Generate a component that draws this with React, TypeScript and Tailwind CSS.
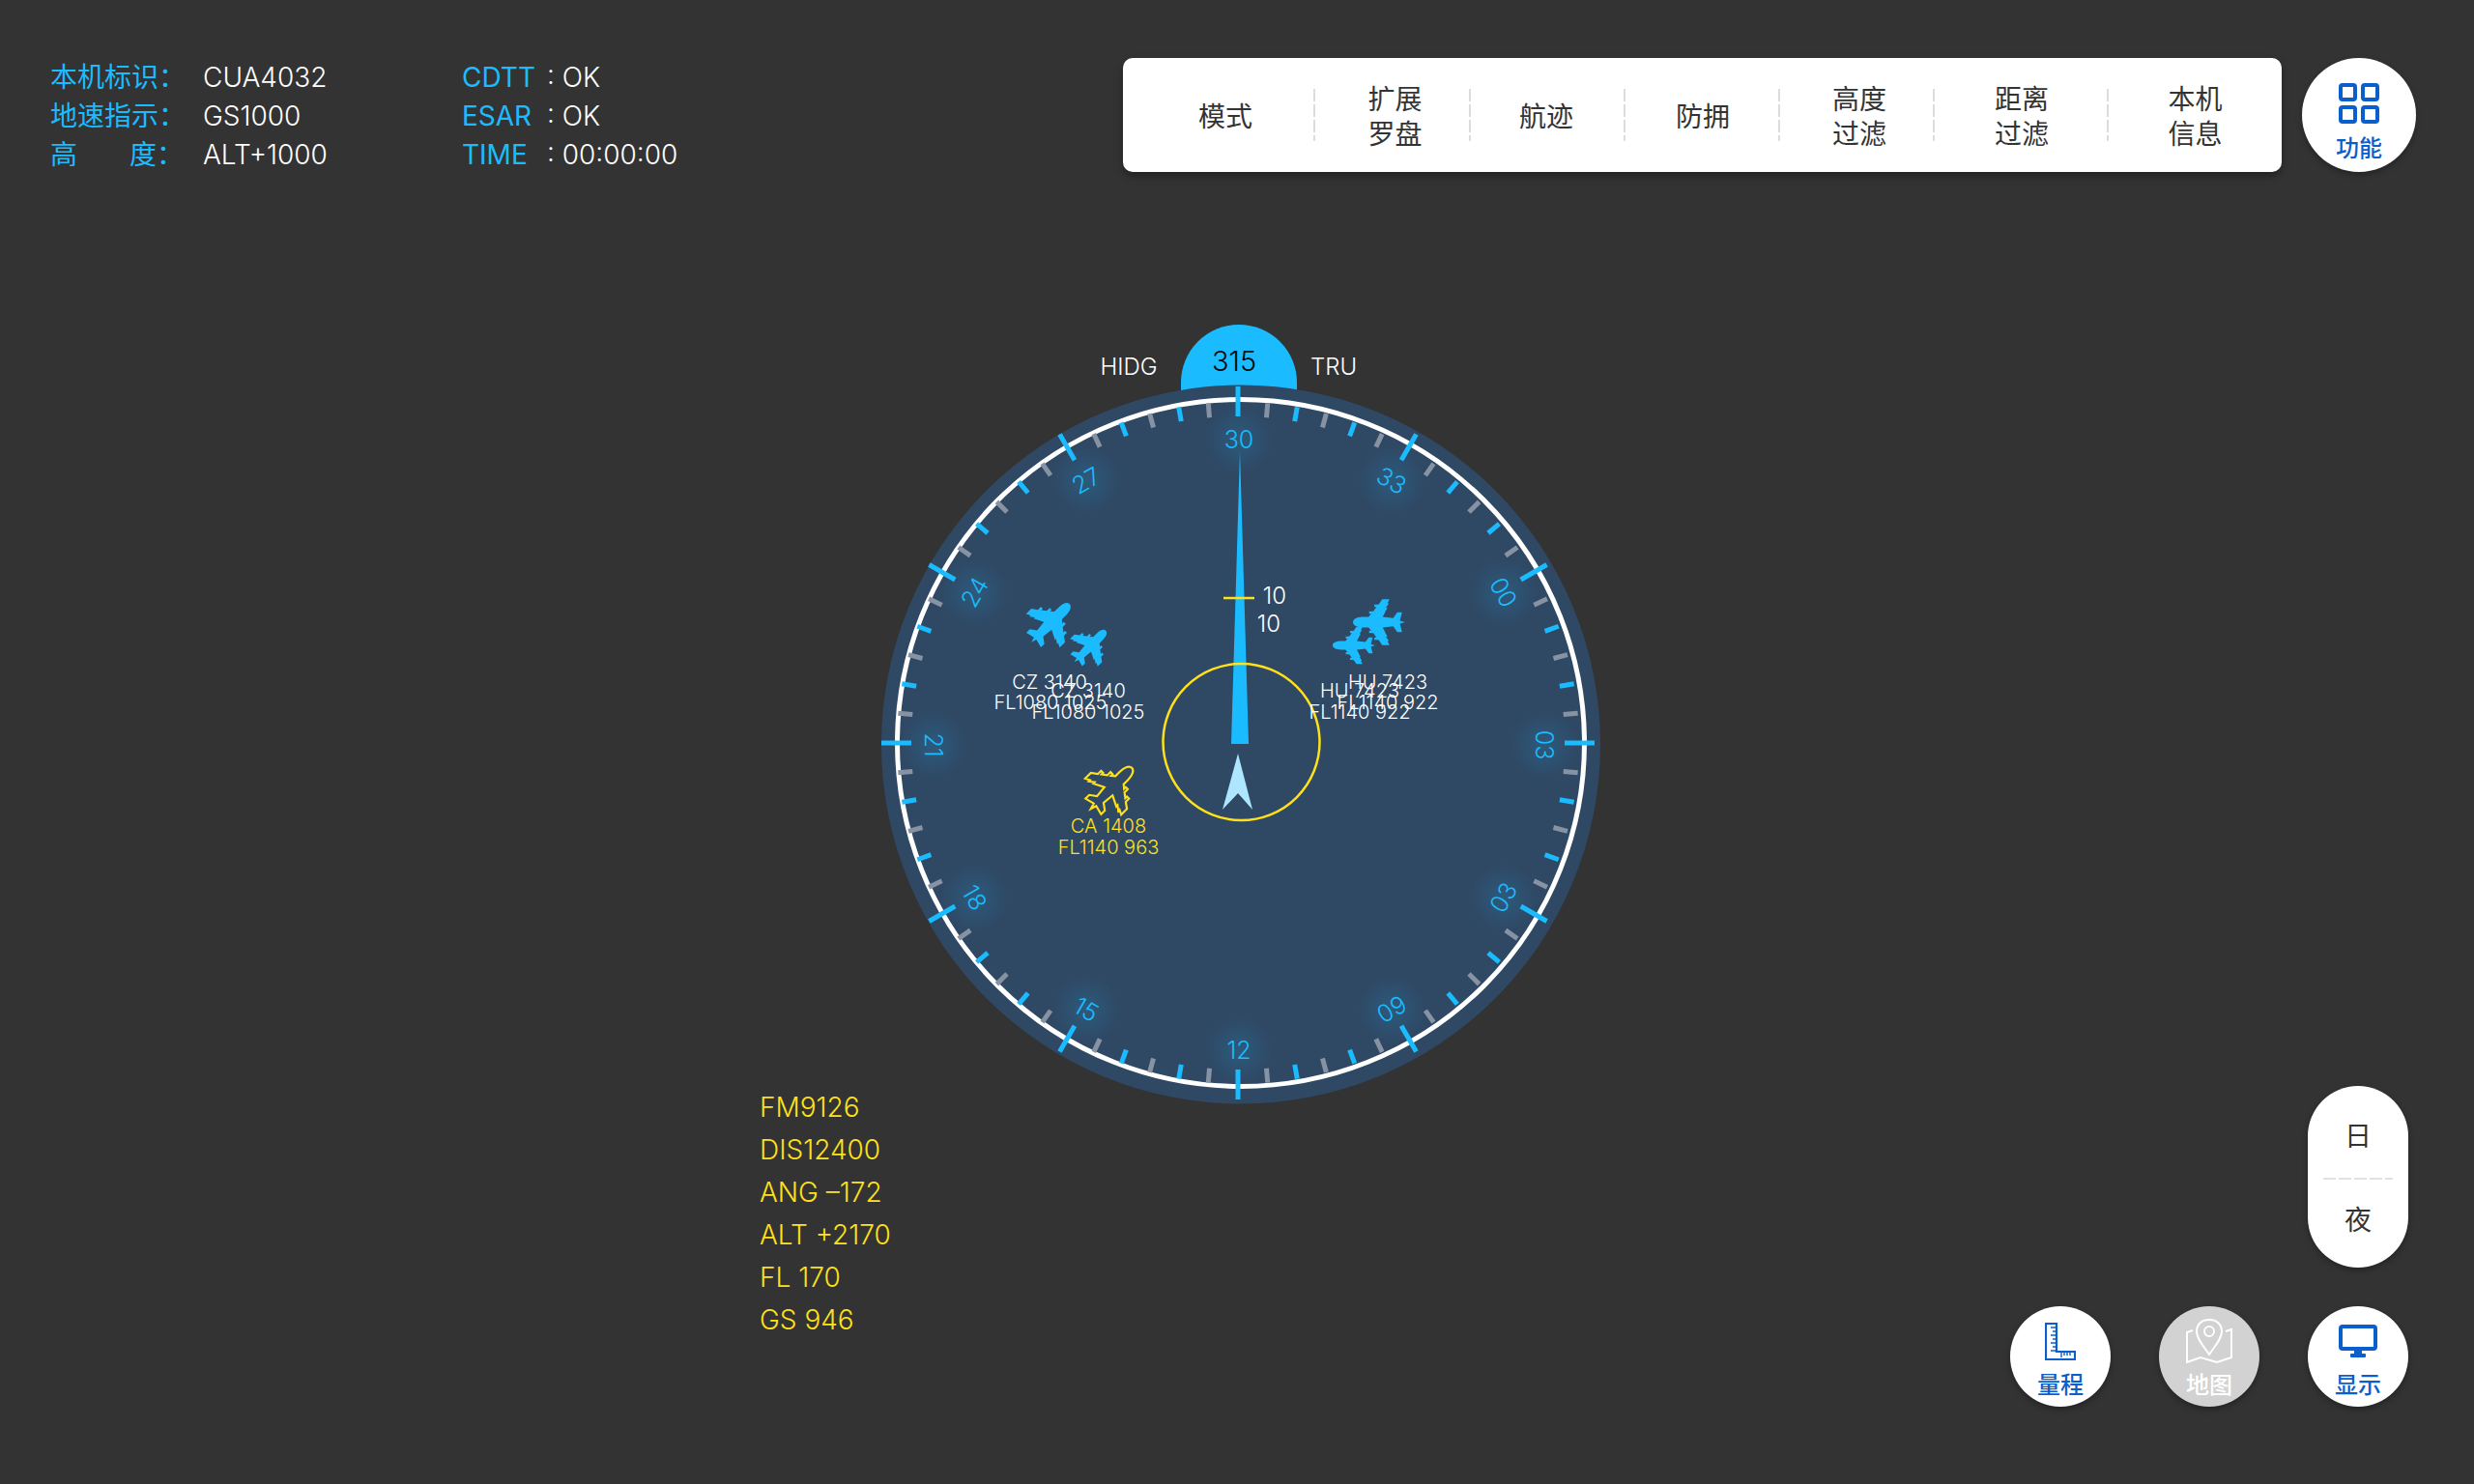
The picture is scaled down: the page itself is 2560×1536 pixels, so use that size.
const BLUE = '#1bbcff'
const YELLOW = '#ffe11a'
const CX = 1281
const CY = 769

// plane pointing up, 100 long, nose at 0,-50
const PLANE =
	'M0 -50 C6 -50 10 -42 10 -30 L10 -20 L16 -15 L16 -19 L21 -19 L21 -11 L29 -5 L29 -9 L34 -9 L34 -1 L44 6 L44 20 L36 16 L36 19 L28 13 L28 16 L10 7 L8 27 L19 35 L19 44 L3 40 L0 50 L-3 40 L-19 44 L-19 35 L-8 27 L-10 7 L-28 16 L-28 13 L-36 19 L-36 16 L-44 20 L-44 6 L-34 -1 L-34 -9 L-29 -9 L-29 -5 L-21 -11 L-21 -19 L-16 -19 L-16 -15 L-10 -20 L-10 -30 C-10 -42 -6 -50 0 -50 Z'

const labels: [number, string, number][] = [
	[0, '30', 0],
	[30, '33', 30],
	[60, '00', 60],
	[90, '03', 90],
	[120, '03', -60],
	[150, '09', -30],
	[180, '12', 0],
	[210, '15', 30],
	[240, '18', 60],
	[270, '21', 90],
	[300, '24', -60],
	[330, '27', -30]
]

const planes = [
	{ x: 1087, y: 645, rot: 45, s: 0.56 },
	{ x: 1128, y: 669, rot: 45, s: 0.46 },
	{ x: 1427, y: 644, rot: -90, s: 0.54 },
	{ x: 1401, y: 668, rot: -90, s: 0.44 }
]

const planeTexts = [
	{ x: 1086, y: 706, t: 'CZ 3140' },
	{ x: 1087, y: 727, t: 'FL1080 1025' },
	{ x: 1126, y: 715, t: 'CZ 3140' },
	{ x: 1126, y: 737, t: 'FL1080 1025' },
	{ x: 1436, y: 706, t: 'HU 7423' },
	{ x: 1436, y: 727, t: 'FL1140 922' },
	{ x: 1407, y: 715, t: 'HU 7423' },
	{ x: 1407, y: 737, t: 'FL1140 922' }
]

function polar(deg: number, r: number) {
	const a = (deg * Math.PI) / 180
	return { x: CX + r * Math.sin(a), y: CY - r * Math.cos(a) }
}

function Compass() {
	const ticks = []
	for (let d = 0; d < 360; d += 5) {
		const major = d % 30 === 0
		const gray = d % 10 !== 0
		const a = polar(d, major ? 369 : 353)
		const b = polar(d, 338)
		ticks.push(
			<line
				key={d}
				x1={a.x}
				y1={a.y}
				x2={b.x}
				y2={b.y}
				stroke={gray ? '#8793a3' : BLUE}
				strokeWidth={5}
			/>
		)
	}

	return (
		<svg width={760} height={820} viewBox="904 330 760 820" className="block">
			<defs>
				<radialGradient id="glow">
					<stop offset="0%" stopColor={BLUE} stopOpacity={0.16} />
					<stop offset="100%" stopColor={BLUE} stopOpacity={0} />
				</radialGradient>
			</defs>
			<path d="M1222 412 V396 A60 60 0 0 1 1342 396 V412 Z" fill={BLUE} />
			<circle cx={1284} cy={770.5} r={372} fill="#2f4864" />
			<circle cx={1284} cy={769} r={355.5} fill="none" stroke="#fff" strokeWidth={5} />
			{ticks}
			{labels.map(([deg, t, rot]) => {
				const p = polar(deg, 316)
				const x = p.x + 1
				const y = p.y + 2
				return (
					<g key={deg}>
						<circle cx={x} cy={y} r={36} fill="url(#glow)" />
						<text
							x={0}
							y={0}
							transform={`translate(${x} ${y}) rotate(${rot})`}
							textAnchor="middle"
							dominantBaseline="central"
							fontSize={25}
							fontWeight={300}
							fill={BLUE}>
							{t}
						</text>
					</g>
				)
			})}
			<text x={1168} y={388} textAnchor="middle" fontSize={24} fontWeight={300} fill="#fff">
				HIDG
			</text>
			<text x={1380} y={388} textAnchor="middle" fontSize={24} fontWeight={300} fill="#fff">
				TRU
			</text>
			<text x={1277} y={384} textAnchor="middle" fontSize={29} fontWeight={300} fill="#0a0a0a">
				315
			</text>

			<polygon points="1283,467 1292,770 1274,770" fill={BLUE} />
			<line x1={1266} y1={619} x2={1298} y2={619} stroke={YELLOW} strokeWidth={2.5} />
			<text x={1319} y={625} textAnchor="middle" fontSize={24} fontWeight={300} fill="#fff">
				10
			</text>
			<text x={1313} y={654} textAnchor="middle" fontSize={24} fontWeight={300} fill="#fff">
				10
			</text>
			<circle cx={1284.5} cy={768} r={81} fill="none" stroke={YELLOW} strokeWidth={2.5} />
			<polygon points="1281,780 1296,838 1281,821 1265,838" fill="#aee6ff" />

			{planes.map((p, i) => (
				<path
					key={i}
					d={PLANE}
					transform={`translate(${p.x} ${p.y}) rotate(${p.rot}) scale(${p.s})`}
					fill={BLUE}
				/>
			))}
			<path
				d={PLANE}
				transform="translate(1150 816) rotate(45) scale(0.6)"
				fill="none"
				stroke={YELLOW}
				strokeWidth={3.6}
			/>

			{planeTexts.map((p, i) => (
				<text key={i} x={p.x} y={p.y + 7} textAnchor="middle" fontSize={20} fontWeight={300} fill="#fff">
					{p.t}
				</text>
			))}
			<text x={1147} y={862} textAnchor="middle" fontSize={20} fontWeight={300} fill={YELLOW}>
				CA 1408
			</text>
			<text x={1147} y={884} textAnchor="middle" fontSize={20} fontWeight={300} fill={YELLOW}>
				FL1140 963
			</text>
		</svg>
	)
}

function InfoBlock() {
	return (
		<div className="flex text-[28px] leading-[40px] font-light text-white">
			<div className="w-[158px] font-normal text-[#1bbcff]">
				<div>本机标识：</div>
				<div>地速指示：</div>
				<div className="flex w-[138px] justify-between">
					<span>高</span>
					<span>度：</span>
				</div>
			</div>
			<div className="w-[268px]">
				<div>CUA4032</div>
				<div>GS1000</div>
				<div>ALT+1000</div>
			</div>
			<div className="w-[88px] font-normal text-[#1bbcff]">
				<div>CDTT</div>
				<div>ESAR</div>
				<div>TIME</div>
			</div>
			<div>
				<div>: OK</div>
				<div>: OK</div>
				<div>: 00:00:00</div>
			</div>
		</div>
	)
}

const menu = [
	{ w: 'w-[199px] pl-[13px]', lines: ['模式'] },
	{ w: 'w-[161px] pl-[4px]', lines: ['扩展', '罗盘'] },
	{ w: 'w-[160px] pr-[4px]', lines: ['航迹'] },
	{ w: 'w-[160px]', lines: ['防拥'] },
	{ w: 'w-[160px] pl-[4px]', lines: ['高度', '过滤'] },
	{ w: 'w-[180px]', lines: ['距离', '过滤'] },
	{ w: 'w-[179px]', lines: ['本机', '信息'] }
]

function Toolbar() {
	return (
		<div className="flex h-[118px] w-[1199px] items-center rounded-[10px] bg-white text-[28px] leading-[36px] text-[#333] shadow-[0_4px_8px_rgba(0,0,0,0.35)]">
			{menu.map((m, i) => (
				<div key={i} className={`relative flex shrink-0 flex-col items-center pt-[3px] ${m.w}`}>
					{m.lines.map(l => (
						<span key={l}>{l}</span>
					))}
					{i < menu.length - 1 && (
						<span className="absolute top-1/2 right-0 h-[54px] w-[2px] -translate-y-1/2 bg-[repeating-linear-gradient(to_bottom,#dcdcdc_0,#dcdcdc_13px,transparent_13px,transparent_16px)]" />
					)}
				</div>
			))}
		</div>
	)
}

function GridIcon() {
	return (
		<svg width={42} height={42} viewBox="0 0 42 42" fill="none" stroke="#0b5fcc" strokeWidth={4}>
			<rect x={2} y={2} width={15} height={15} rx={2} />
			<rect x={25} y={2} width={15} height={15} rx={2} />
			<rect x={2} y={25} width={15} height={15} rx={2} />
			<rect x={25} y={25} width={15} height={15} rx={2} />
		</svg>
	)
}

function RulerIcon() {
	return (
		<svg width={32} height={39} viewBox="0 0 32 39" fill="none" stroke="#0b5fcc" strokeWidth={2}>
			<path d="M1 1 H12 V30 H31 V38 H1 Z" strokeWidth={2.2} />
			<path d="M12 5 H6 M12 9 H8 M12 13 H6 M12 17 H8 M12 21 H6 M12 25 H8 M12 29 H6" strokeWidth={1.4} />
			<path d="M17 30 V36 M20 30 V34 M23 30 V34 M26 30 V34" strokeWidth={1.4} />
		</svg>
	)
}

function MapIcon() {
	return (
		<svg width={48} height={46} viewBox="0 0 48 46" fill="none" stroke="#fff" strokeWidth={2}>
			<path d="M24 1 C15 1 11 7 11 13 C11 21 18 28 24 37 C30 28 37 21 37 13 C37 7 33 1 24 1 Z" />
			<circle cx={24} cy={13} r={5} />
			<path d="M7 12 L1 14 V45 L15 40 L32 45 L47 40 V11 L41 13" />
		</svg>
	)
}

function MonitorIcon() {
	return (
		<svg width={40} height={34} viewBox="0 0 40 34" fill="#0b5fcc">
			<rect x={2} y={2} width={36} height={23} rx={2} fill="none" stroke="#0b5fcc" strokeWidth={4} />
			<rect x={16} y={26} width={8} height={5} />
			<rect x={12} y={30} width={16} height={4} rx={1} />
		</svg>
	)
}

function RoundButton({ label, icon, muted }: { label: string; icon: React.ReactNode; muted?: boolean }) {
	return (
		<div
			className={`flex h-[104px] w-[104px] flex-col items-center rounded-full shadow-[0_3px_6px_rgba(0,0,0,0.3)] ${
				muted ? 'bg-[#d2d2d2] text-white' : 'bg-white text-[#0b5fcc]'
			}`}>
			<div className="flex h-[68px] items-center justify-center pt-[4px]">{icon}</div>
			<span className="text-[24px] leading-[28px] font-medium">{label}</span>
		</div>
	)
}

export default function App() {
	return (
		<div className="flex h-[1536px] w-[2560px] flex-col overflow-hidden bg-[#333333] font-['Inter','Noto_Sans_CJK_SC',sans-serif]">
			<header className="flex h-[178px] items-start justify-between pt-[60px] pr-[60px] pl-[52px]">
				<InfoBlock />
				<div className="flex items-center gap-[21px]">
					<Toolbar />
					<div className="flex h-[118px] w-[118px] flex-col items-center rounded-full bg-white pt-[26px] text-[#0b5fcc] shadow-[0_3px_6px_rgba(0,0,0,0.3)]">
						<GridIcon />
						<span className="mt-[12px] text-[24px] leading-[28px] font-medium">功能</span>
					</div>
				</div>
			</header>

			<main className="grid flex-1 grid-cols-[904px_760px_1fr]">
				<div className="self-end pb-[148px] pl-[786px] text-[28px] leading-[44px] font-light whitespace-nowrap text-[#ffe11a]">
					<div>FM9126</div>
					<div>DIS12400</div>
					<div>ANG –172</div>
					<div>ALT +2170</div>
					<div>FL 170</div>
					<div>GS 946</div>
				</div>
				<div className="mt-[152px] self-start">
					<Compass />
				</div>
				<div className="flex flex-col items-end gap-[40px] self-end pr-[68px] pb-[80px]">
					<div className="flex h-[188px] w-[104px] flex-col items-center rounded-full bg-white pt-[34px] text-[28px] leading-[36px] text-[#333] shadow-[0_3px_6px_rgba(0,0,0,0.3)]">
						<span>日</span>
						<span className="mt-[25px] h-[2px] w-[72px] bg-[repeating-linear-gradient(to_right,#e0e2e8_0,#e0e2e8_13px,transparent_13px,transparent_16px)]" />
						<span className="mt-[24px]">夜</span>
					</div>
					<div className="flex gap-[50px]">
						<RoundButton label="量程" icon={<RulerIcon />} />
						<RoundButton label="地图" icon={<MapIcon />} muted />
						<RoundButton label="显示" icon={<MonitorIcon />} />
					</div>
				</div>
			</main>
		</div>
	)
}
